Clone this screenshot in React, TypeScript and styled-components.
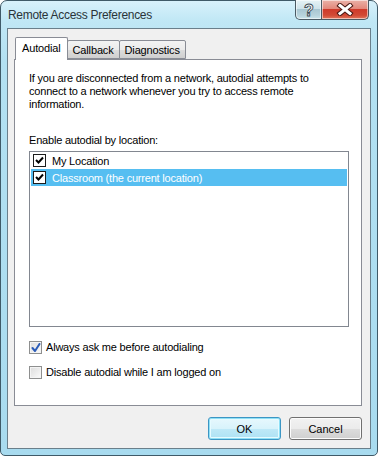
import React from 'react';
import styled, { createGlobalStyle } from 'styled-components';

const Global = createGlobalStyle`
  html, body { margin: 0; padding: 0; background: #fff; }
  body {
    width: 378px; height: 456px; overflow: hidden;
    font-family: "Liberation Sans", Arial, sans-serif;
  }
  * { box-sizing: border-box; }
`;

const Window = styled.div`
  width: 378px;
  height: 456px;
  display: flex;
  flex-direction: column;
  border: 1px solid #3f5a68;
  border-radius: 7px 7px 5px 5px;
  background: linear-gradient(180deg, #d8f1fb 0px, #c0e7f5 20px, #b3e1f2 60px, #a8dbef 100%);
  padding: 0 6px 6px 6px;
`;

const TitleBar = styled.div`
  height: 27px;
  display: flex;
  align-items: flex-start;
`;

const Title = styled.div`
  margin-top: 7px;
  padding-left: 1px;
  font-family: "Liberation Sans", Arial, sans-serif;
  font-size: 12px;
  line-height: 15px;
  letter-spacing: -0.3px;
  color: #2a3439;
`;

const CaptionButtons = styled.div`
  margin-left: auto;
  margin-right: 2px;
  margin-top: -1px;
  display: flex;
`;

const CaptionButton = styled.div<{ $variant: 'help' | 'close' }>`
  height: 20px;
  width: ${(p) => (p.$variant === 'close' ? '47px' : '27px')};
  display: flex;
  align-items: center;
  justify-content: center;
  border: 1px solid #4a5a63;
  border-top: none;
  border-left-width: ${(p) => (p.$variant === 'close' ? '0' : '1px')};
  border-radius: ${(p) => (p.$variant === 'close' ? '0 0 5px 0' : '0 0 0 5px')};
  box-shadow: inset 0 0 0 1px rgba(255, 255, 255, 0.55);
  background: ${(p) =>
    p.$variant === 'close'
      ? 'linear-gradient(180deg, #eab2a8 0%, #e3897c 45%, #cf3b2b 50%, #d24a35 80%, #e2775c 100%)'
      : 'linear-gradient(180deg, #e6f3f6 0%, #cfe3ea 45%, #a9c7d2 50%, #b7d3dc 80%, #c9e4ea 100%)'};
`;

const Client = styled.div`
  flex: 1;
  display: flex;
  flex-direction: column;
  border: 1px solid #6a7f8b;
  background: #f0f0f0;
  padding: 8px 8px 8px 6px;
`;

const TabRow = styled.div`
  display: flex;
  align-items: flex-end;
  height: 22px;
  padding-left: 1px;
`;

const Tab = styled.div<{ $active?: boolean }>`
  position: relative;
  z-index: ${(p) => (p.$active ? 2 : 1)};
  height: ${(p) => (p.$active ? '23px' : '19px')};
  margin-bottom: ${(p) => (p.$active ? '-1px' : '0')};
  margin-left: ${(p) => (p.$active ? '0' : '-1px')};
  padding: ${(p) => (p.$active ? '4px 6px 0 6px' : '3px 5px 0 5px')};
  border: 1px solid #898c95;
  border-bottom: ${(p) => (p.$active ? 'none' : '1px solid #898c95')};
  border-radius: 2px 2px 0 0;
  font-size: 11px;
  line-height: 13px;
  letter-spacing: -0.15px;
  color: #000;
  background: ${(p) =>
    p.$active ? '#fff' : 'linear-gradient(180deg, #f3f3f3 0%, #ebebeb 50%, #dddddd 51%, #cfcfcf 100%)'};
  &:first-child { margin-left: 0; }
`;

const Panel = styled.div`
  flex: 1;
  display: flex;
  flex-direction: column;
  background: #fff;
  border: 1px solid #898c95;
  padding: 12px 12px 0 14px;
`;

const Paragraph = styled.p`
  margin: 0;
  width: 305px;
  font-size: 11px;
  line-height: 13px;
  letter-spacing: -0.2px;
  color: #000;
`;

const Label = styled.div`
  margin-top: 23px;
  font-size: 11px;
  line-height: 13px;
  letter-spacing: -0.2px;
  color: #000;
`;

const ListBox = styled.div`
  margin-top: 4px;
  height: 176px;
  border: 1px solid #828790;
  padding: 0 1px;
  display: flex;
  flex-direction: column;
`;

const ListRow = styled.div<{ $selected?: boolean }>`
  height: 17px;
  display: flex;
  align-items: center;
  gap: 6px;
  padding-left: 2px;
  font-size: 11px;
  letter-spacing: -0.2px;
  color: ${(p) => (p.$selected ? '#fff' : '#000')};
  background: ${(p) => (p.$selected ? '#56bef1' : 'transparent')};
`;

const ClassicBox = styled.span`
  width: 13px;
  height: 13px;
  display: inline-flex;
  align-items: center;
  justify-content: center;
  border: 1px solid #1c1c1c;
  background: #fff;
`;

const OptionRow = styled.label<{ $first?: boolean }>`
  margin-top: ${(p) => (p.$first ? '14px' : '12px')};
  display: flex;
  align-items: center;
  gap: 4px;
  font-size: 11px;
  line-height: 13px;
  letter-spacing: -0.2px;
  color: #000;
`;

const VistaBox = styled.span`
  width: 13px;
  height: 13px;
  display: inline-flex;
  align-items: center;
  justify-content: center;
  border: 1px solid #8e8f8f;
  background: linear-gradient(135deg, #dcdcdc 0%, #eeeeee 60%, #fbfbfb 100%);
  box-shadow: inset 0 0 0 1px #f4f4f4;
`;

const ButtonRow = styled.div`
  margin-top: 11px;
  display: flex;
  justify-content: flex-end;
  gap: 8px;
`;

const Button = styled.button<{ $default?: boolean }>`
  width: 73px;
  height: 23px;
  padding: 0;
  font-family: "Liberation Sans", Arial, sans-serif;
  font-size: 11px;
  color: #000;
  border-radius: 3px;
  border: 1px solid ${(p) => (p.$default ? '#3c96c4' : '#707070')};
  box-shadow: ${(p) =>
    p.$default ? 'inset 0 0 0 1px #8fe0f6, inset 0 0 0 2px #e6fbff' : 'inset 0 0 0 1px #fcfcfc'};
  background: ${(p) =>
    p.$default
      ? 'linear-gradient(180deg, #e7f8fd 0%, #d8f3fb 50%, #bfe9f7 51%, #ade2f4 100%)'
      : 'linear-gradient(180deg, #f2f2f2 0%, #ebebeb 50%, #dddddd 51%, #cfcfcf 100%)'};
`;

const ClassicCheck = () => (
  <svg width="9" height="9" viewBox="0 0 9 9">
    <path d="M1 4 L3.5 6.5 L8 1.5" stroke="#000" strokeWidth="2" fill="none" />
  </svg>
);

const VistaCheck = () => (
  <svg width="10" height="10" viewBox="0 0 10 10">
    <path d="M1.5 5 L4 8 L8.5 1" stroke="#2b5cb8" strokeWidth="2" fill="none" strokeLinecap="round" strokeLinejoin="round" />
  </svg>
);

const HelpGlyph = () => (
  <svg width="12" height="16" viewBox="0 0 12 16">
    <text
      x="6"
      y="14"
      textAnchor="middle"
      fontFamily="Liberation Sans, Arial, sans-serif"
      fontWeight="bold"
      fontSize="16"
      fill="#fff"
      stroke="#3b4a52"
      strokeWidth="0.9"
    >
      ?
    </text>
  </svg>
);

const CloseGlyph = () => (
  <svg width="18" height="13" viewBox="0 0 18 13">
    <path d="M4 2.5 L14 10.5 M14 2.5 L4 10.5" stroke="#4a1a14" strokeWidth="5" strokeLinecap="square" />
    <path d="M4 2.5 L14 10.5 M14 2.5 L4 10.5" stroke="#fff" strokeWidth="3" strokeLinecap="square" />
  </svg>
);

export default function App() {
  return (
    <>
      <Global />
      <Window>
        <TitleBar>
          <Title>Remote Access Preferences</Title>
          <CaptionButtons>
            <CaptionButton $variant="help">
              <HelpGlyph />
            </CaptionButton>
            <CaptionButton $variant="close">
              <CloseGlyph />
            </CaptionButton>
          </CaptionButtons>
        </TitleBar>
        <Client>
          <TabRow>
            <Tab $active>Autodial</Tab>
            <Tab>Callback</Tab>
            <Tab>Diagnostics</Tab>
          </TabRow>
          <Panel>
            <Paragraph>
              If you are disconnected from a network, autodial attempts to connect to a network
              whenever you try to access remote information.
            </Paragraph>
            <Label>Enable autodial by location:</Label>
            <ListBox>
              <ListRow>
                <ClassicBox>
                  <ClassicCheck />
                </ClassicBox>
                My Location
              </ListRow>
              <ListRow $selected>
                <ClassicBox>
                  <ClassicCheck />
                </ClassicBox>
                Classroom (the current location)
              </ListRow>
            </ListBox>
            <OptionRow $first>
              <VistaBox>
                <VistaCheck />
              </VistaBox>
              Always ask me before autodialing
            </OptionRow>
            <OptionRow>
              <VistaBox />
              Disable autodial while I am logged on
            </OptionRow>
          </Panel>
          <ButtonRow>
            <Button $default>OK</Button>
            <Button>Cancel</Button>
          </ButtonRow>
        </Client>
      </Window>
    </>
  );
}
